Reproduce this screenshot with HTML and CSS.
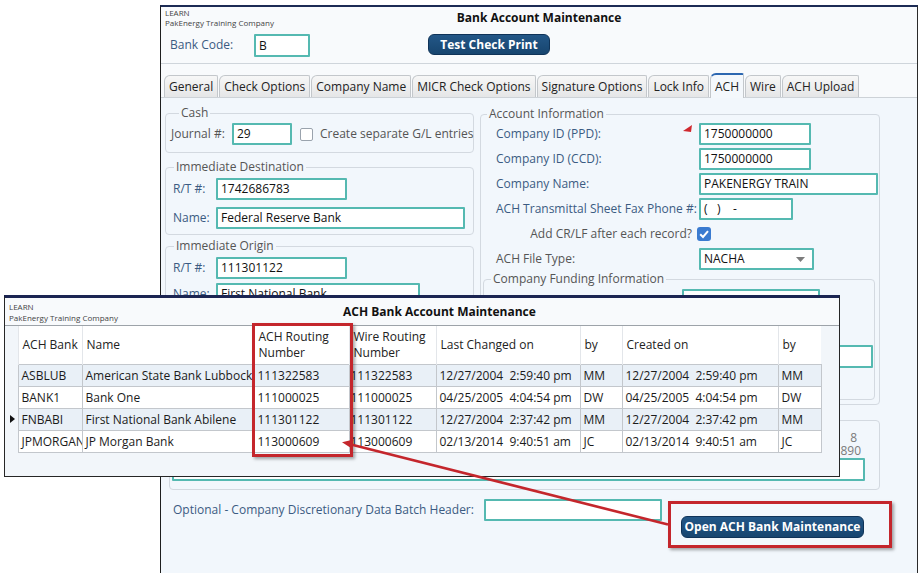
FILE: index.html
```html
<!DOCTYPE html>
<html>
<head>
<meta charset="utf-8">
<title>Bank Account Maintenance</title>
<link rel="stylesheet" href="styles.css">
</head>
<body>
<div class="desk">
  <section class="win main-win">
    <header class="win-head">
      <div class="brand"><span>LEARN</span><span>PakEnergy Training Company</span></div>
      <h1 class="win-title">Bank Account Maintenance</h1>
      <div class="bank-row">
        <span class="lbl blue bank-lbl">Bank Code:</span>
        <span class="inp w56">B</span>
        <button class="btn test-btn">Test Check Print</button>
      </div>
    </header>
    <nav class="tabs">
      <span class="tab">General</span>
      <span class="tab">Check Options</span>
      <span class="tab">Company Name</span>
      <span class="tab">MICR Check Options</span>
      <span class="tab">Signature Options</span>
      <span class="tab">Lock Info</span>
      <span class="tab active">ACH</span>
      <span class="tab">Wire</span>
      <span class="tab">ACH Upload</span>
    </nav>
    <div class="panel">
      <div class="cols">
        <div class="left-col">
          <fieldset class="grp cash">
            <legend>Cash</legend>
            <div class="frow">
              <span class="lbl grey w61">Journal #:</span>
              <span class="inp w60">29</span>
              <span class="cbox"></span>
              <span class="lbl grey cb-lbl">Create separate G/L entries</span>
            </div>
          </fieldset>
          <fieldset class="grp dest">
            <legend>Immediate Destination</legend>
            <div class="frow">
              <span class="lbl blue w43">R/T #:</span>
              <span class="inp w131">1742686783</span>
            </div>
            <div class="frow">
              <span class="lbl blue w43">Name:</span>
              <span class="inp w249">Federal Reserve Bank</span>
            </div>
          </fieldset>
          <fieldset class="grp orig">
            <legend>Immediate Origin</legend>
            <div class="frow">
              <span class="lbl blue w43">R/T #:</span>
              <span class="inp w131">111301122</span>
            </div>
            <div class="frow">
              <span class="lbl blue w43">Name:</span>
              <span class="inp w204">First National Bank</span>
            </div>
          </fieldset>
        </div>
        <div class="right-col">
          <fieldset class="grp acct">
            <legend>Account Information</legend>
            <div class="arow flagged">
              <span class="lbl blue w203">Company ID (PPD):</span>
              <span class="inp w112">1750000000</span>
              <svg class="flag" width="10" height="7" viewBox="0 0 10 7"><path d="M0 6 L9 0 L8 7 Z" fill="#d0282e"/></svg>
            </div>
            <div class="arow">
              <span class="lbl blue w203">Company ID (CCD):</span>
              <span class="inp w112">1750000000</span>
            </div>
            <div class="arow">
              <span class="lbl blue w203">Company Name:</span>
              <span class="inp w179">PAKENERGY TRAIN</span>
            </div>
            <div class="arow">
              <span class="lbl blue w203">ACH Transmittal Sheet Fax Phone #:</span>
              <span class="inp w94 pre">(   )    -</span>
            </div>
            <div class="arow">
              <span class="lbl grey w203 right">Add CR/LF after each record?</span>
              <span class="cbox checked"><svg width="14" height="14" viewBox="0 0 14 14"><path d="M3.2 7.3 L6 10 L11 4.2" stroke="#fff" stroke-width="2" fill="none"/></svg></span>
            </div>
            <div class="arow">
              <span class="lbl grey w203">ACH File Type:</span>
              <span class="inp sel w115">NACHA<svg class="caret" width="9" height="5" viewBox="0 0 9 5"><path d="M0 0 H9 L4.5 5 Z" fill="#7c7c7c"/></svg></span>
            </div>
            <fieldset class="grp fund">
              <legend>Company Funding Information</legend>
              <div class="arow frow-f">
                <span class="lbl blue w192">Payment Bank:</span>
                <span class="inp w138">FNBABI</span>
              </div>
              <div class="arow frow-f"></div>
              <div class="arow frow-f">
                <span class="w192"></span>
                <span class="inp w191"></span>
              </div>
            </fieldset>
          </fieldset>
        </div>
      </div>
      <fieldset class="grp lower">
        <div class="ruler r1">8</div>
        <div class="ruler r2">890</div>
        <span class="inp wide"></span>
      </fieldset>
      <div class="opt-row">
        <span class="lbl blue opt-lbl">Optional - Company Discretionary Data Batch Header:</span>
        <span class="inp w178"></span>
        <button class="btn open-btn">Open ACH Bank Maintenance</button>
      </div>
    </div>
  </section>

  <section class="win ach-win">
    <header class="ach-head">
      <div class="brand ach-brand"><span>LEARN</span><span>PakEnergy Training Company</span></div>
      <h2 class="win-title">ACH Bank Account Maintenance</h2>
    </header>
    <table class="grid">
      <colgroup>
        <col class="c-rh"><col class="c-bank"><col class="c-name"><col class="c-ach"><col class="c-wire"><col class="c-chg"><col class="c-by"><col class="c-cre"><col class="c-by2">
      </colgroup>
      <thead>
        <tr>
          <th class="rh"></th>
          <th>ACH Bank</th>
          <th>Name</th>
          <th>ACH Routing<br>Number</th>
          <th>Wire Routing<br>Number</th>
          <th>Last Changed on</th>
          <th>by</th>
          <th>Created on</th>
          <th>by</th>
        </tr>
      </thead>
      <tbody>
        <tr class="odd">
          <td class="rh"></td><td>ASBLUB</td><td>American State Bank Lubbock</td><td>111322583</td><td class="wr">111322583</td><td>12/27/2004  2:59:40 pm</td><td>MM</td><td>12/27/2004  2:59:40 pm</td><td>MM</td>
        </tr>
        <tr>
          <td class="rh"></td><td>BANK1</td><td>Bank One</td><td>111000025</td><td class="wr">111000025</td><td>04/25/2005  4:04:54 pm</td><td>DW</td><td>04/25/2005  4:04:54 pm</td><td>DW</td>
        </tr>
        <tr class="odd">
          <td class="rh"><span class="cur"></span></td><td>FNBABI</td><td>First National Bank Abilene</td><td>111301122</td><td class="wr">111301122</td><td>12/27/2004  2:37:42 pm</td><td>MM</td><td>12/27/2004  2:37:42 pm</td><td>MM</td>
        </tr>
        <tr>
          <td class="rh"></td><td>JPMORGAN</td><td>JP Morgan Bank</td><td>113000609</td><td class="wr">113000609</td><td>02/13/2014  9:40:51 am</td><td>JC</td><td>02/13/2014  9:40:51 am</td><td>JC</td>
        </tr>
      </tbody>
    </table>
  </section>

  <div class="callout routing-box"></div>
  <div class="callout button-box"></div>
  <svg class="arrow" width="924" height="578" viewBox="0 0 924 578">
    <line x1="668" y1="524.5" x2="351" y2="444.6" stroke="#c4262c" stroke-width="2.6"/>
    <polygon points="342,442.3 353.6,439.4 351.4,448.2" fill="#c4262c"/>
  </svg>
</div>
</body>
</html>
```

FILE: styles.css
```css
* { box-sizing: border-box; }
html, body { margin: 0; padding: 0; }
body {
  width: 924px;
  height: 578px;
  overflow: hidden;
  background: #ffffff;
  font-family: "Open Sans", "Noto Sans", sans-serif;
  font-size: 12px;
  color: #222;
}
.desk { position: relative; width: 924px; height: 578px; }
.win { position: absolute; }

/* ---------- main window ---------- */
.main-win {
  left: 160px;
  top: 5px;
  width: 758px;
  height: 568px;
  border-left: 1px solid #1e1e1e;
  border-right: 1px solid #2a2a2a;
  border-top: 2px solid #1c2b55;
  background: #f2f7fc;
  display: flex;
  flex-direction: column;
}
.win-head {
  background: #f8fafc;
  padding: 1px 0 6px;
  border-bottom: 1px solid #cfd5db;
  display: grid;
  grid-template-columns: 1fr auto 1fr;
}
.brand {
  display: flex;
  flex-direction: column;
  font-size: 8px;
  line-height: 10px;
  color: #444;
  padding-left: 4px;
}
.win-title {
  margin: 0;
  font-size: 12px;
  font-weight: 700;
  line-height: 20px;
  color: #111;
}
.bank-row {
  grid-column: 1 / -1;
  display: flex;
  align-items: flex-start;
  margin-top: 6px;
  padding-left: 9px;
}
.bank-lbl { width: 84px; line-height: 23px; }
.bank-row .inp { height: 23px; line-height: 19px; }

.btn {
  font-family: "Open Sans", "Noto Sans", sans-serif;
  font-size: 12px;
  font-weight: 700;
  color: #fff;
  background: linear-gradient(#235787, #17456f);
  border: 1px solid #0f3358;
  border-radius: 6px;
  padding: 0;
  height: 21px;
  line-height: 18px;
}
.test-btn { width: 122px; margin-left: 118px; }

/* ---------- tabs ---------- */
.tabs {
  display: flex;
  align-items: flex-end;
  gap: 1px;
  height: 34px;
  padding-left: 3px;
  background: #f8fafc;
  border-bottom: 1px solid #cdd2d7;
}
.tab {
  height: 22px;
  line-height: 21px;
  padding: 0 4px;
  border: 1px solid #c3c7cb;
  border-bottom: none;
  border-radius: 6px 2px 0 0;
  background: linear-gradient(#f7f7f7, #e5e6e7);
  color: #222;
  white-space: nowrap;
}
.tab.active {
  height: 25px;
  line-height: 22px;
  background: #f4f8fc;
  border-top: 2px solid #2c67b1;
  margin-bottom: -1px;
  padding-top: 1px;
}

/* ---------- panel ---------- */
.panel {
  flex: 1;
  padding: 7px 0 0 4px;
  overflow: hidden;
}
.cols {
  display: grid;
  grid-template-columns: 309px 400px;
  column-gap: 6px;
  align-items: start;
}
.right-col { margin-top: 1px; }

.grp {
  margin: 0;
  padding: 0;
  border: 1px solid #d3d9e0;
  border-radius: 4px;
  min-width: 0;
}
.grp > legend {
  font-size: 12px;
  line-height: 16px;
  padding: 0 2px;
  margin-left: 8px;
  color: #555;
}

.lbl { white-space: nowrap; line-height: 22px; }
.blue { color: #3b5b82; }
.grey { color: #555; }
.right { text-align: right; padding-right: 7px; }

.inp {
  display: block;
  flex: none;
  height: 22px;
  border: 2px solid #55b9b1;
  border-radius: 1px;
  background: #fff;
  padding: 0 3px;
  line-height: 18px;
  font-size: 12px;
  color: #111;
  white-space: nowrap;
  overflow: hidden;
}
.pre { white-space: pre; }

.w43 { width: 43px; flex: none; }
.w61 { width: 61px; flex: none; }
.w192 { width: 192px; flex: none; }
.w203 { width: 203px; flex: none; }
.w56 { width: 56px; }
.w60 { width: 60px; }
.w94 { width: 94px; }
.w112 { width: 112px; }
.w115 { width: 115px; }
.w131 { width: 131px; }
.w138 { width: 138px; }
.w178 { width: 178px; }
.w179 { width: 179px; }
.w191 { width: 191px; }
.w204 { width: 204px; }
.w249 { width: 249px; }

.frow { display: flex; align-items: center; height: 22px; }

.cash { padding: 2px 0 7px 5px; }
.cbox {
  display: block;
  flex: none;
  width: 13px;
  height: 13px;
  border: 1px solid #9aa3ad;
  border-radius: 2px;
  background: #fff;
  margin-left: 8px;
}
.cb-lbl { margin-left: 7px; }

.dest { margin-top: 6px; padding: 3px 0 5px 7px; display: flex; flex-direction: column; gap: 7px; }
.orig { margin-top: 3px; padding: 3px 0 6px 7px; display: flex; flex-direction: column; gap: 4px; }
.dest > legend, .orig > legend { margin-left: 1px; }

.acct { padding: 1px 0 4px 0; }
.acct > legend { margin-left: 6px; }
.arow {
  display: flex;
  align-items: center;
  height: 22px;
  margin-bottom: 3px;
  padding-left: 15px;
}
.flagged { position: relative; }
.flag { position: absolute; left: 202px; top: 2px; }
.cbox.checked {
  width: 14px;
  height: 14px;
  margin-left: -2px;
  border: none;
  border-radius: 3px;
  background: #3a7bd0;
}
.cbox.checked svg { display: block; }
.sel { display: flex; align-items: center; }
.caret { margin-left: auto; margin-right: 4px; }

.fund { margin: -2px 4px 0 2px; padding: 2px 0 26px 0; }
.fund > legend { margin-left: 7px; }
.frow-f { padding-left: 6px; height: 23px; margin-bottom: 5px; }
.frow-f .inp { height: 23px; line-height: 19px; }

.lower {
  margin: 15px 0 0 4px;
  width: 711px;
  padding: 10px 14px 8px 2px;
}
.ruler {
  text-align: right;
  line-height: 13px;
  color: #7a7a7a;
}
.r1 { padding-right: 8px; }
.r2 { padding-right: 4px; }
.lower .inp.wide { margin-top: 1px; height: 23px; width: 100%; }

.opt-row {
  display: flex;
  align-items: flex-start;
  margin: 9px 0 0 8px;
}
.opt-lbl { width: 311px; flex: none; }
.open-btn { width: 183px; height: 22px; margin-left: 19px; margin-top: 17px; }

/* ---------- ACH bank window ---------- */
.ach-win {
  left: 4px;
  top: 295px;
  width: 836px;
  height: 182px;
  border: 1px solid #262626;
  border-top: 3px solid #1b2552;
  background: #f2f6fa;
}
.ach-head {
  display: flex;
  align-items: center;
  height: 28px;
  padding: 3px 0 2px 4px;
  background: #f8fafc;
  border-bottom: 1px solid #9da3a9;
}
.ach-brand { width: 334px; flex: none; line-height: 11px; padding-left: 0; }
.ach-head .win-title { line-height: 16px; }

.grid {
  border-collapse: collapse;
  table-layout: fixed;
  width: 816px;
  font-size: 12px;
}
.c-rh { width: 13px; }
.c-bank { width: 64px; }
.c-name { width: 172px; }
.c-ach { width: 95px; }
.c-wire { width: 87px; }
.c-chg { width: 144px; }
.c-by { width: 42px; }
.c-cre { width: 156px; }
.c-by2 { width: 43px; }

.grid th {
  height: 38px;
  background: #fff;
  font-weight: 400;
  text-align: left;
  padding: 0 0 0 4px;
  line-height: 16px;
  color: #222;
  border-left: 1px solid #e3e6ea;
  vertical-align: middle;
  white-space: nowrap;
  overflow: hidden;
}
.grid td {
  height: 22px;
  padding: 0 0 0 3px;
  border: 1px solid #c3c7cc;
  white-space: pre;
  overflow: hidden;
  color: #1b1b1b;
  background: #fff;
}
.grid tr.odd td { background: #e9f0f7; }
.grid th.rh, .grid td.rh, .grid tr.odd td.rh {
  border: none;
  background: transparent;
  padding: 0;
}
.grid td.wr { padding-left: 1px; }
.cur {
  display: block;
  width: 0;
  height: 0;
  margin-left: 5px;
  border-left: 5px solid #111;
  border-top: 4px solid transparent;
  border-bottom: 4px solid transparent;
}

/* ---------- annotations ---------- */
.callout {
  position: absolute;
  border: 3px solid #c4262c;
  box-shadow: 2px 2px 3px rgba(0, 0, 0, 0.35);
}
.routing-box { left: 252px; top: 323px; width: 101px; height: 134px; }
.button-box { left: 668px; top: 501px; width: 224px; height: 47px; }
.arrow { position: absolute; left: 0; top: 0; pointer-events: none; }
```
